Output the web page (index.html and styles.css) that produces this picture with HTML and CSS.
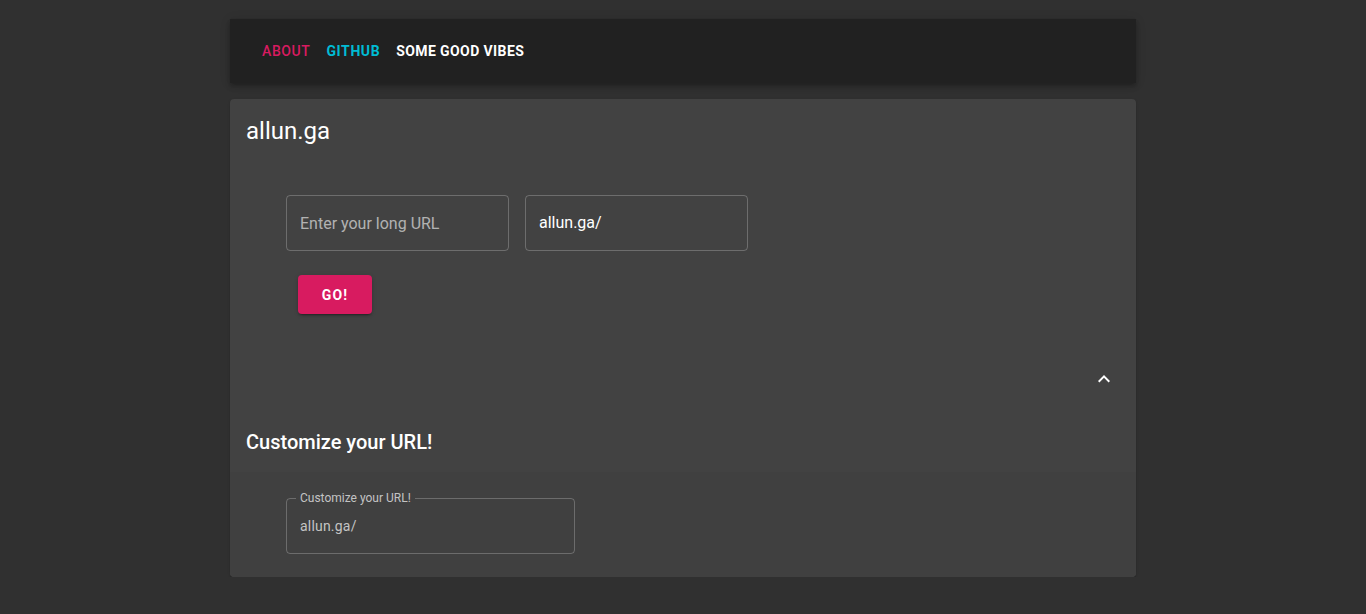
FILE: index.html
```html
<!DOCTYPE html>
<html lang="en">
<head>
    <meta charset="UTF-8">
    <meta name="viewport" content="width=device-width, initial-scale=1.0">
    <title>allun.ga</title>
    <link rel="stylesheet" href="styles.css">
</head>
<body>
    <div class="page">
        <!-- top navigation -->
        <header class="appbar">
            <nav class="nav">
                <a class="nav-link about" href="#">About</a>
                <a class="nav-link github" href="#">Github</a>
                <a class="nav-link vibes" href="#">Some good vibes</a>
            </nav>
        </header>

        <main class="card">
            <h1 class="title">allun.ga</h1>

            <div class="form">
                <div class="fields">
                    <div class="field">
                        <span class="placeholder">Enter your long URL</span>
                    </div>
                    <div class="field">
                        <span class="value">allun.ga/</span>
                    </div>
                </div>
                <button class="go">Go!</button>
            </div>

            <!-- collapsible section -->
            <div class="toggle-row">
                <svg class="chevron" viewBox="0 0 24 24" width="24" height="24">
                    <path d="M7.41 15.41L12 10.83l4.59 4.58L18 14l-6-6-6 6z" fill="#fff"/>
                </svg>
            </div>

            <h2 class="subtitle">Customize your URL!</h2>

            <div class="custom">
                <div class="outlined">
                    <span class="label">Customize your URL!</span>
                    <span class="muted">allun.ga/</span>
                </div>
            </div>
        </main>
    </div>
</body>
</html>
```

FILE: styles.css
```css
/* dark material look for the whole page */
html, body {
    margin: 0;
    padding: 0;
}

body {
    background: #303030;
    font-family: Roboto, "Liberation Sans", sans-serif;
    color: #fff;
}

.page {
    width: 906px;
    margin: 0 auto;
    padding-top: 19px;
}

.appbar {
    background: #212121;
    height: 64px;
    display: flex;
    align-items: center;
    padding: 0 32px;
    box-shadow: 0 2px 4px -1px rgba(0,0,0,0.2), 0 4px 5px 0 rgba(0,0,0,0.14), 0 1px 10px 0 rgba(0,0,0,0.12);
}

.nav {
    display: flex;
    gap: 16px;
    margin-top: -1px;
}

.nav-link {
    font-size: 14px;
    font-weight: 500;
    text-transform: uppercase;
    letter-spacing: 0.6px;
    text-decoration: none;
}

.about { color: #d81b60; }
.github { color: #00bcd4; font-weight: 700; }
.vibes { color: #fff; font-weight: 700; letter-spacing: 0.4px; }

.card {
    margin-top: 16px;
    background: #424242;
    border-radius: 4px;
    box-shadow: 0 2px 1px -1px rgba(0,0,0,0.2), 0 1px 1px 0 rgba(0,0,0,0.14), 0 1px 3px 0 rgba(0,0,0,0.12);
    overflow: hidden;
}

.title {
    margin: 0;
    padding: 16px 16px 0;
    font-size: 24px;
    font-weight: 400;
    line-height: 32px;
}

.form {
    padding: 48px 56px 0;
}

.fields {
    display: flex;
    gap: 16px;
}

.field {
    box-sizing: border-box;
    width: 223px;
    height: 56px;
    border: 1px solid rgba(255,255,255,0.23);
    border-radius: 4px;
    display: flex;
    align-items: center;
    padding: 0 13px;
    font-size: 16px;
}

.placeholder {
    color: rgba(255,255,255,0.6);
}

.value {
    color: #fff;
    margin-top: -2px;
}

.go {
    margin: 24px 0 0 12px;
    width: 74px;
    height: 39px;
    border: none;
    border-radius: 4px;
    background: #d81b60;
    color: #fff;
    font-family: inherit;
    font-size: 14px;
    font-weight: 700;
    letter-spacing: 1.2px;
    text-transform: uppercase;
    box-shadow: 0 3px 1px -2px rgba(0,0,0,0.2), 0 2px 2px 0 rgba(0,0,0,0.14), 0 1px 5px 0 rgba(0,0,0,0.12);
}

.toggle-row {
    display: flex;
    justify-content: flex-end;
    padding: 53px 20px 0;
}

.chevron {
    display: block;
}

.subtitle {
    margin: 0;
    padding: 41px 16px 20px;
    font-size: 20px;
    font-weight: 500;
    line-height: 20px;
}

.custom {
    background: #404040;
    padding: 26px 56px 23px;
}

.outlined {
    box-sizing: border-box;
    width: 289px;
    height: 56px;
    border: 1px solid rgba(255,255,255,0.23);
    border-radius: 4px;
    padding: 0 13px;
    display: flex;
    align-items: center;
    position: relative;
}

/* floating label sits on the top border */
.outlined .label {
    position: absolute;
    top: -7px;
    left: 9px;
    padding: 0 4px;
    background: #404040;
    font-size: 12px;
    line-height: 12px;
    color: rgba(255,255,255,0.7);
}

.muted {
    font-size: 14px;
    letter-spacing: 0.2px;
    color: rgba(255,255,255,0.7);
}
```
